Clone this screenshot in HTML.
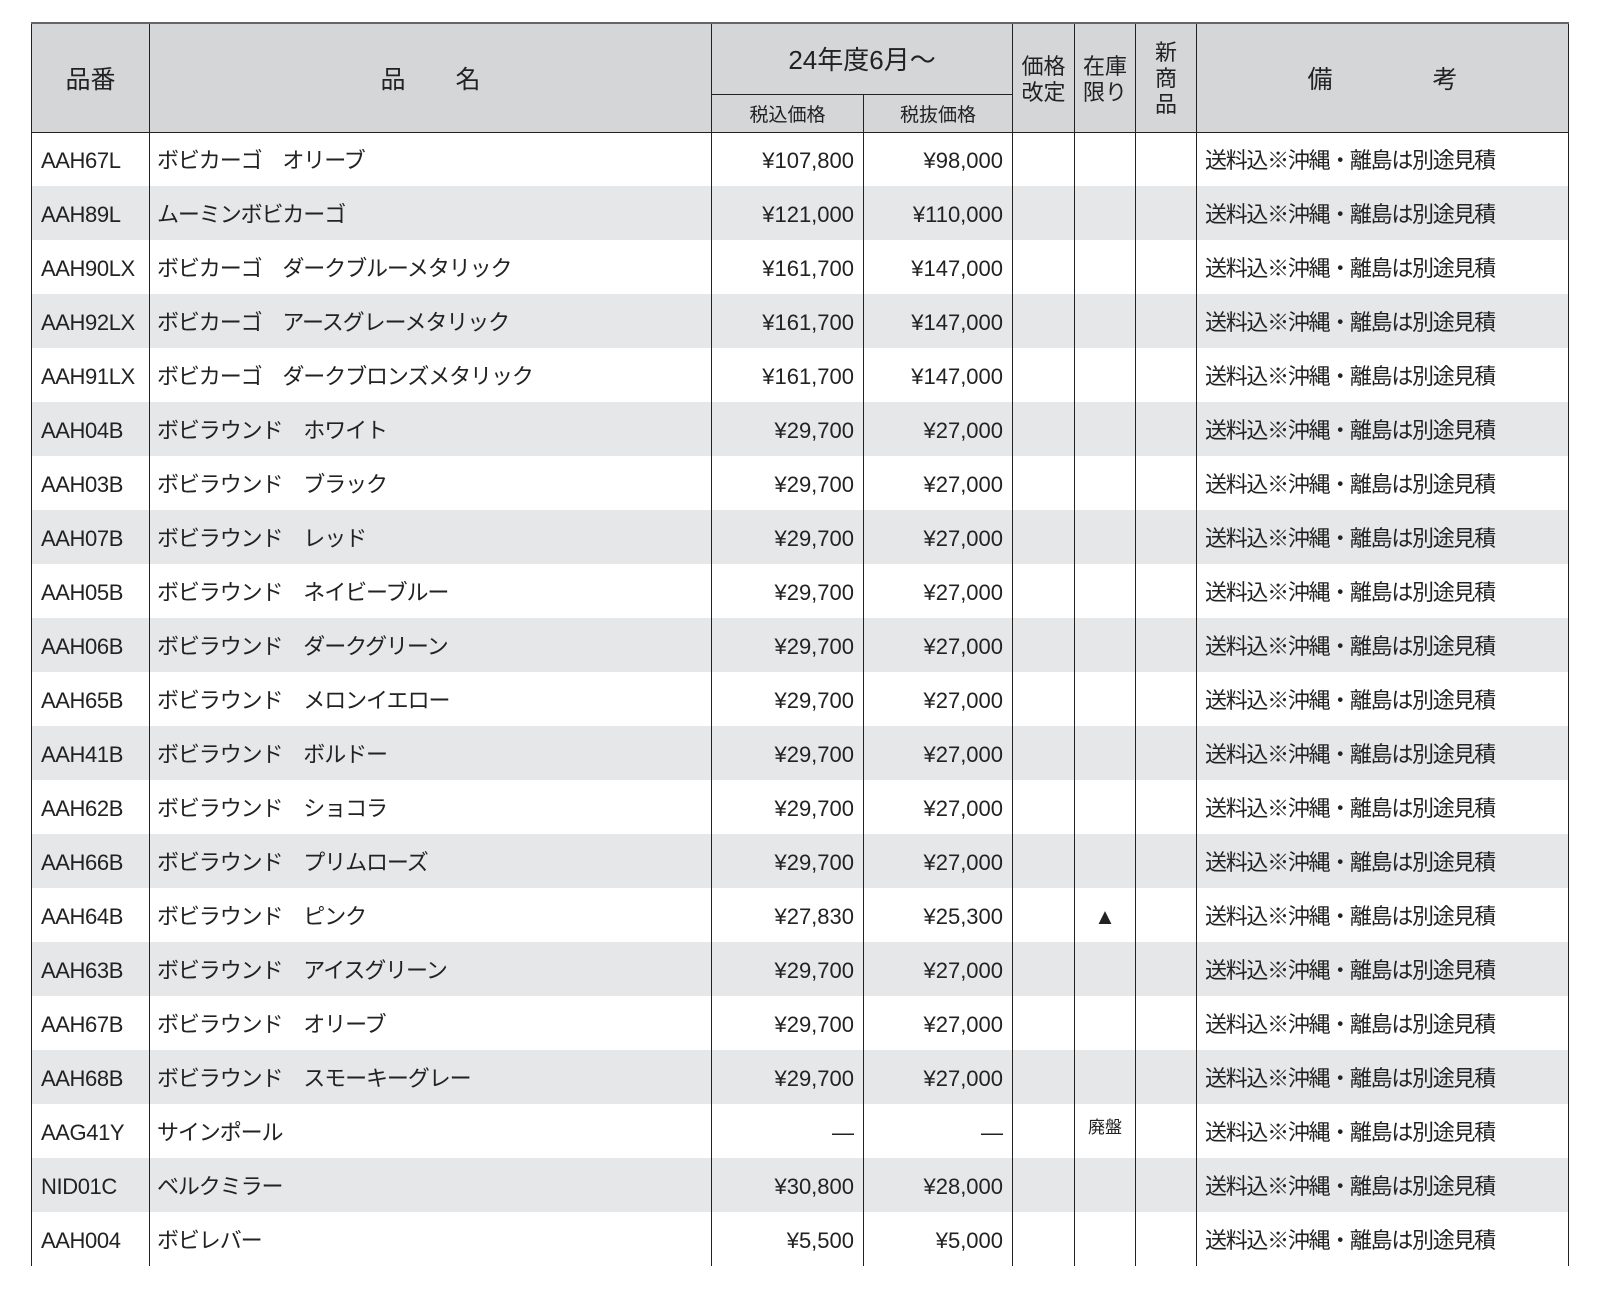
<!DOCTYPE html>
<html><head><meta charset="utf-8"><style>
body{margin:0;background:#fff;width:1597px;height:1307px;position:relative;overflow:hidden;font-family:"Liberation Sans","Noto Sans CJK JP",sans-serif;color:#222}
table{position:absolute;left:31px;top:22px;border-collapse:collapse;table-layout:fixed;width:1537px}
td,th{border-left:1px solid #222;border-right:1px solid #222;padding:0;font-weight:normal;white-space:nowrap;overflow:hidden;box-sizing:border-box}
thead th{background:#d5d6d8;border-bottom:1.5px solid #222;text-align:center;font-size:25px;line-height:27px}
thead tr:first-child th{border-top:2px solid #666}
tbody tr{height:54px}
tbody td{height:54px;font-size:22px;line-height:24px;padding-top:4px}
tbody tr:nth-child(even) td{background:#e6e7e8}
.c{padding-left:9px;letter-spacing:-0.4px}.n{padding-left:7px;letter-spacing:-1.1px}
.r{text-align:right;padding-right:9px}
.m{text-align:center}
.b{padding-left:8px;letter-spacing:-1.3px}
.sub th{font-size:19px;border-top:1.5px solid #222;padding-top:4px}
</style></head><body>
<table>
<colgroup><col style="width:118px"><col style="width:562px"><col style="width:152px"><col style="width:149px"><col style="width:62px"><col style="width:61px"><col style="width:61px"><col style="width:372px"></colgroup>
<thead>
<tr style="height:71px"><th rowspan="2" style="padding-top:6px">品番</th><th rowspan="2" style="padding-top:6px">品　　名</th><th colspan="2" style="padding-top:4px;font-size:26px">24年度6月〜</th><th rowspan="2" style="font-size:22px;line-height:26px;vertical-align:top;padding-top:30px">価格<br>改定</th><th rowspan="2" style="font-size:22px;line-height:26px;vertical-align:top;padding-top:30px">在庫<br>限り</th><th rowspan="2" style="font-size:22px;line-height:26px;padding-top:2px">新<br>商<br>品</th><th rowspan="2" style="padding-top:6px">備　　　　考</th></tr>
<tr class="sub" style="height:38px"><th>税込価格</th><th>税抜価格</th></tr>
</thead>
<tbody>
<tr><td class="c">AAH67L</td><td class="n">ボビカーゴ　オリーブ</td><td class="r">¥107,800</td><td class="r">¥98,000</td><td></td><td></td><td></td><td class="b">送料込※沖縄・離島は別途見積</td></tr>
<tr><td class="c">AAH89L</td><td class="n">ムーミンボビカーゴ</td><td class="r">¥121,000</td><td class="r">¥110,000</td><td></td><td></td><td></td><td class="b">送料込※沖縄・離島は別途見積</td></tr>
<tr><td class="c">AAH90LX</td><td class="n">ボビカーゴ　ダークブルーメタリック</td><td class="r">¥161,700</td><td class="r">¥147,000</td><td></td><td></td><td></td><td class="b">送料込※沖縄・離島は別途見積</td></tr>
<tr><td class="c">AAH92LX</td><td class="n">ボビカーゴ　アースグレーメタリック</td><td class="r">¥161,700</td><td class="r">¥147,000</td><td></td><td></td><td></td><td class="b">送料込※沖縄・離島は別途見積</td></tr>
<tr><td class="c">AAH91LX</td><td class="n">ボビカーゴ　ダークブロンズメタリック</td><td class="r">¥161,700</td><td class="r">¥147,000</td><td></td><td></td><td></td><td class="b">送料込※沖縄・離島は別途見積</td></tr>
<tr><td class="c">AAH04B</td><td class="n">ボビラウンド　ホワイト</td><td class="r">¥29,700</td><td class="r">¥27,000</td><td></td><td></td><td></td><td class="b">送料込※沖縄・離島は別途見積</td></tr>
<tr><td class="c">AAH03B</td><td class="n">ボビラウンド　ブラック</td><td class="r">¥29,700</td><td class="r">¥27,000</td><td></td><td></td><td></td><td class="b">送料込※沖縄・離島は別途見積</td></tr>
<tr><td class="c">AAH07B</td><td class="n">ボビラウンド　レッド</td><td class="r">¥29,700</td><td class="r">¥27,000</td><td></td><td></td><td></td><td class="b">送料込※沖縄・離島は別途見積</td></tr>
<tr><td class="c">AAH05B</td><td class="n">ボビラウンド　ネイビーブルー</td><td class="r">¥29,700</td><td class="r">¥27,000</td><td></td><td></td><td></td><td class="b">送料込※沖縄・離島は別途見積</td></tr>
<tr><td class="c">AAH06B</td><td class="n">ボビラウンド　ダークグリーン</td><td class="r">¥29,700</td><td class="r">¥27,000</td><td></td><td></td><td></td><td class="b">送料込※沖縄・離島は別途見積</td></tr>
<tr><td class="c">AAH65B</td><td class="n">ボビラウンド　メロンイエロー</td><td class="r">¥29,700</td><td class="r">¥27,000</td><td></td><td></td><td></td><td class="b">送料込※沖縄・離島は別途見積</td></tr>
<tr><td class="c">AAH41B</td><td class="n">ボビラウンド　ボルドー</td><td class="r">¥29,700</td><td class="r">¥27,000</td><td></td><td></td><td></td><td class="b">送料込※沖縄・離島は別途見積</td></tr>
<tr><td class="c">AAH62B</td><td class="n">ボビラウンド　ショコラ</td><td class="r">¥29,700</td><td class="r">¥27,000</td><td></td><td></td><td></td><td class="b">送料込※沖縄・離島は別途見積</td></tr>
<tr><td class="c">AAH66B</td><td class="n">ボビラウンド　プリムローズ</td><td class="r">¥29,700</td><td class="r">¥27,000</td><td></td><td></td><td></td><td class="b">送料込※沖縄・離島は別途見積</td></tr>
<tr><td class="c">AAH64B</td><td class="n">ボビラウンド　ピンク</td><td class="r">¥27,830</td><td class="r">¥25,300</td><td></td><td class="m" style="font-size:22px">▲</td><td></td><td class="b">送料込※沖縄・離島は別途見積</td></tr>
<tr><td class="c">AAH63B</td><td class="n">ボビラウンド　アイスグリーン</td><td class="r">¥29,700</td><td class="r">¥27,000</td><td></td><td></td><td></td><td class="b">送料込※沖縄・離島は別途見積</td></tr>
<tr><td class="c">AAH67B</td><td class="n">ボビラウンド　オリーブ</td><td class="r">¥29,700</td><td class="r">¥27,000</td><td></td><td></td><td></td><td class="b">送料込※沖縄・離島は別途見積</td></tr>
<tr><td class="c">AAH68B</td><td class="n">ボビラウンド　スモーキーグレー</td><td class="r">¥29,700</td><td class="r">¥27,000</td><td></td><td></td><td></td><td class="b">送料込※沖縄・離島は別途見積</td></tr>
<tr><td class="c">AAG41Y</td><td class="n">サインポール</td><td class="r">—</td><td class="r">—</td><td></td><td class="m" style="font-size:17px;padding-top:0;padding-bottom:6px">廃盤</td><td></td><td class="b">送料込※沖縄・離島は別途見積</td></tr>
<tr><td class="c">NID01C</td><td class="n">ベルクミラー</td><td class="r">¥30,800</td><td class="r">¥28,000</td><td></td><td></td><td></td><td class="b">送料込※沖縄・離島は別途見積</td></tr>
<tr><td class="c">AAH004</td><td class="n">ボビレバー</td><td class="r">¥5,500</td><td class="r">¥5,000</td><td></td><td></td><td></td><td class="b">送料込※沖縄・離島は別途見積</td></tr>
</tbody></table>
</body></html>
